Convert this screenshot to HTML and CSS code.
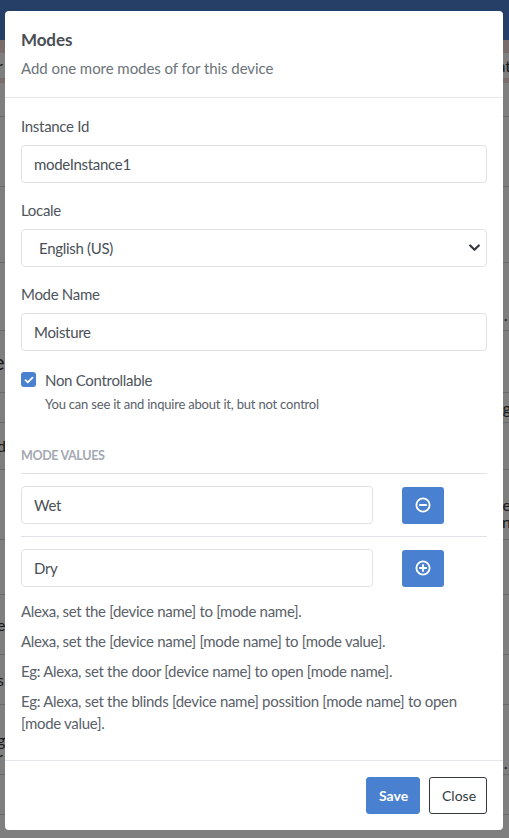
FILE: index.html
```html
<!DOCTYPE html>
<html lang="en">
<head>
<meta charset="utf-8">
<title>Modes</title>
<link rel="stylesheet" href="styles.css">
</head>
<body>
<div class="page">
  <header class="topbar"></header>
  <div class="alert">
    <div class="alert-row"><span class="peek-left">r</span><span class="peek-right">at</span></div>
  </div>
  <ul class="bg-list">
    <li class="r1"></li>
    <li class="r2"></li>
    <li class="r3"></li>
    <li class="r4"><span class="dots-right">...</span></li>
    <li class="r5"><span class="big-left">e</span></li>
    <li class="r6"><span class="peek-right">g</span></li>
    <li class="r7"><span class="peek-left">d</span></li>
    <li class="r8"><span class="peek-right">e</span><span class="peek-right second">n</span></li>
    <li class="r9"></li>
    <li class="r10"><span class="peek-left">e</span></li>
    <li class="r11"><span class="peek-left">s</span></li>
    <li class="r12"><span class="peek-left">g</span><span class="peek-left second">r</span><span class="dots-right low">...</span></li>
    <li class="r13"></li>
  </ul>
</div>

<div class="overlay">
  <div class="modal">
    <div class="modal-header">
      <h5 class="modal-title">Modes</h5>
      <p class="modal-subtitle">Add one more modes of for this device</p>
    </div>
    <div class="modal-body">
      <div class="form-group">
        <label class="label">Instance Id</label>
        <div class="input">modeInstance1</div>
      </div>
      <div class="form-group">
        <label class="label">Locale</label>
        <div class="input select">
          <span>English (US)</span>
          <svg class="chevron" width="11" height="8" viewBox="0 0 11 8"><path d="M1.2 1.5 L5.5 5.8 L9.8 1.5" fill="none" stroke="#343a40" stroke-width="2.2" stroke-linecap="round" stroke-linejoin="round"/></svg>
        </div>
      </div>
      <div class="form-group">
        <label class="label">Mode Name</label>
        <div class="input">Moisture</div>
      </div>
      <div class="check">
        <span class="checkbox">
          <svg width="10" height="8" viewBox="0 0 10 8"><path d="M1.5 4.2 L3.8 6.3 L8.5 1.6" fill="none" stroke="#fff" stroke-width="1.8" stroke-linecap="round" stroke-linejoin="round"/></svg>
        </span>
        <div class="check-text">
          <div class="check-label">Non Controllable</div>
          <div class="check-help">You can see it and inquire about it, but not control</div>
        </div>
      </div>
      <h6 class="section-title">MODE VALUES</h6>
      <div class="value-row">
        <div class="input">Wet</div>
        <button class="icon-btn" type="button" aria-label="Remove">
          <svg width="16" height="16" viewBox="0 0 16 16"><circle cx="8" cy="8" r="6.6" fill="none" stroke="#fff" stroke-width="1.8"/><path d="M4.9 8 H11.1" stroke="#fff" stroke-width="1.9" stroke-linecap="round"/></svg>
        </button>
      </div>
      <div class="value-row">
        <div class="input">Dry</div>
        <button class="icon-btn" type="button" aria-label="Add">
          <svg width="16" height="16" viewBox="0 0 16 16"><circle cx="8" cy="8" r="6.6" fill="none" stroke="#fff" stroke-width="1.8"/><path d="M4.9 8 H11.1 M8 4.9 V11.1" stroke="#fff" stroke-width="1.9" stroke-linecap="round"/></svg>
        </button>
      </div>
      <p class="hint">Alexa, set the [device name] to [mode name].</p>
      <p class="hint">Alexa, set the [device name] [mode name] to [mode value].</p>
      <p class="hint">Eg: Alexa, set the door [device name] to open [mode name].</p>
      <p class="hint">Eg: Alexa, set the blinds [device name] possition [mode name] to open [mode value].</p>
    </div>
    <div class="modal-footer">
      <button class="btn btn-primary" type="button">Save</button>
      <button class="btn btn-outline" type="button">Close</button>
    </div>
  </div>
</div>
</body>
</html>
```
FILE: styles.css
```css
* { box-sizing: border-box; }
html, body { margin: 0; padding: 0; }
body {
  font-family: Lato, "Noto Sans", sans-serif;
  background: #ffffff;
  width: 509px;
  height: 838px;
  overflow: hidden;
}

/* ---------- background page ---------- */
.page { width: 509px; }
.topbar { height: 40px; background: #4a7ecc; }
.alert { background: #f4d8d6; padding: 13px 0 5px; }
.alert-row {
  height: 25px;
  background: #ffffff;
  position: relative;
  font-size: 16px;
  line-height: 25px;
  color: #333;
}
.peek-left { position: absolute; left: -3px; top: 0; }
.peek-right { position: absolute; right: -2px; top: 0; }
.bg-list { list-style: none; margin: 0; padding: 0; }
.bg-list li {
  position: relative;
  border-bottom: 1px solid #d4d4d4;
  font-size: 16px;
  line-height: 24px;
  color: #333;
}
.bg-list .peek-left, .bg-list .peek-right { top: 50%; transform: translateY(-50%); }
.bg-list .second { top: 75%; }
.r1 { height: 34px; }
.r2 { height: 70px; }
.r3 { height: 76px; }
.r4 { height: 68px; }
.r5 { height: 62px; }
.r6 { height: 30px; }
.r7 { height: 47px; }
.r8 { height: 70px; }
.r9 { height: 55px; }
.r10 { height: 60px; }
.r11 { height: 50px; }
.r12 { height: 70px; }
.r13 { height: 40px; }
.big-left { position: absolute; left: -7px; top: 50%; transform: translateY(-50%); font-size: 22px; }
.dots-right {
  position: absolute; right: -8px; bottom: 10px;
  color: #1e4f9a; font-weight: 700; font-size: 14px; letter-spacing: 1px; line-height: 8px;
}
.dots-right.low { bottom: 6px; }

/* ---------- overlay + modal ---------- */
.overlay {
  position: fixed;
  inset: 0;
  background: rgba(0, 0, 0, 0.5);
}
.modal {
  position: absolute;
  left: 5px;
  top: 11px;
  width: 498px;
  background: #ffffff;
  border-radius: 4px;
  color: #495057;
  letter-spacing: -0.3px;
}
.modal-header {
  padding: 17px 16px 18px;
  border-bottom: 1px solid #e3e6ea;
}
.modal-title {
  margin: 0;
  font-size: 17px;
  line-height: 24px;
  font-weight: 700;
  color: #4a4f55;
  letter-spacing: -0.1px;
}
.modal-subtitle {
  margin: 5px 0 0;
  font-size: 15px;
  line-height: 22px;
  color: #6c737a;
  letter-spacing: -0.05px;
}
.modal-body { padding: 17px 16px 18px; }
.form-group { margin-bottom: 16px; }
.label {
  display: block;
  font-size: 15px;
  line-height: 22px;
  margin-bottom: 8px;
  color: #4e555c;
}
.input {
  height: 38px;
  border: 1px solid #dfe3e8;
  border-radius: 4px;
  padding: 0 12px;
  font-size: 15px;
  line-height: 36px;
  color: #495057;
  background: #fff;
}
.select {
  display: flex;
  align-items: center;
  justify-content: space-between;
  padding: 0 6px 0 17px;
}
.chevron { display: block; }

.check { display: flex; gap: 9px; padding-top: 3px; }
.checkbox {
  flex: 0 0 15px;
  width: 15px;
  height: 15px;
  margin-top: 2px;
  background: #4a80d0;
  border-radius: 3px;
  display: flex;
  align-items: center;
  justify-content: center;
}
.check-label { font-size: 15px; line-height: 20px; color: #4e555c; }
.check-help { font-size: 13px; line-height: 18px; color: #5a6169; margin-top: 5px; letter-spacing: -0.2px; }

.section-title {
  margin: 34px 0 0;
  padding-bottom: 9px;
  font-size: 12.5px;
  line-height: 17px;
  font-weight: 700;
  color: #a3a9b3;
  letter-spacing: -0.35px;
}
.value-row {
  display: flex;
  align-items: center;
  gap: 29px;
  border-top: 1px solid #dfe3e8;
  padding: 12px 0;
}
.value-row .input { width: 352px; flex: 0 0 352px; }
.icon-btn {
  width: 42px;
  height: 37px;
  border: none;
  border-radius: 3px;
  background: #4a80d0;
  display: flex;
  align-items: center;
  justify-content: center;
  padding: 0;
}
.value-row + .value-row { padding-bottom: 13px; }
.hint {
  margin: 0 0 8px;
  font-size: 15px;
  line-height: 22px;
  color: #5a6169;
}

.modal-footer {
  border-top: 1px solid #e3e6ea;
  padding: 16px 16px 16px;
  display: flex;
  justify-content: flex-end;
  gap: 9px;
}
.btn {
  height: 37px;
  border-radius: 3px;
  font-family: inherit;
  font-size: 14px;
  padding: 0 12px;
  cursor: pointer;
}
.btn-primary {
  background: #4a80d0;
  border: 1px solid #4a80d0;
  color: #fff;
  font-weight: 700;
  width: 54px;
}
.btn-outline {
  background: #fff;
  border: 1px solid #343a40;
  color: #343a40;
  width: 58px;
}
```
